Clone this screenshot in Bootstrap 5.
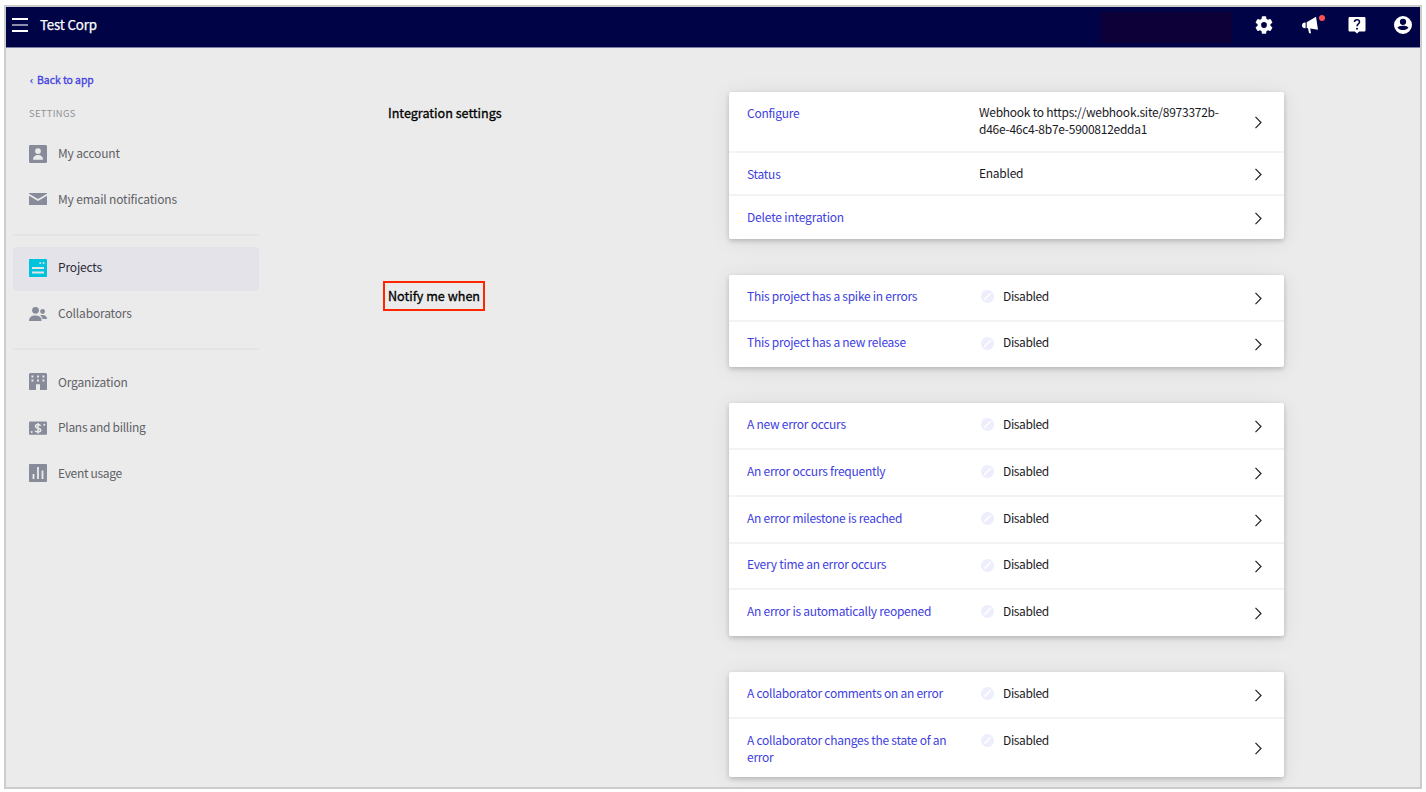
<!DOCTYPE html>
<html lang="en">
<head>
<meta charset="utf-8">
<meta name="viewport" content="width=device-width, initial-scale=1">
<title>Test Corp – Integration settings</title>
<link href="https://cdn.jsdelivr.net/npm/bootstrap@5.3.0/dist/css/bootstrap.min.css" rel="stylesheet">
<style>
body{font-family:"Noto Sans CJK SC","Open Sans",sans-serif;font-size:12px;line-height:17px;color:#1a1a1f;background:#fff;overflow:hidden}
a{text-decoration:none;color:#4040e0}
.frame{margin:5px 4px 0;width:1418px;height:784px;border:2px solid #ccc;background:#ebebeb;overflow:hidden}
.topbar{height:41px;background:#000446;border-bottom:1px solid #7c7ea6;padding:0 8px 4px 6px;--bs-navbar-padding-y:0}
.brand{font-size:13.3px;color:#fff;margin-left:12px;padding-bottom:2px;letter-spacing:-.15px;-webkit-text-stroke:.25px currentColor}
.masked{width:131px;height:31px;background:#0d0038;margin-right:23px;position:relative;top:2px}
.tool{width:18px;height:18px;display:block}
.dot{position:absolute;width:6px;height:6px;border-radius:50%;background:#ff4f57;left:17px;top:-1px}
.sidebar{width:253px;padding:23px 0 0 7px}
.back{font-size:10.4px;margin-left:17px;height:17px;letter-spacing:-.05px;-webkit-text-stroke:.3px currentColor}
.back .arrow{margin-right:4px}
.section-name{font-size:9.4px;color:#8f9096;margin:17px 0 0 16px;letter-spacing:.35px}
.side-item{height:45.6px;padding-left:16px;color:#606167;border-radius:3px;gap:11px;letter-spacing:-.17px}
.side-item span{padding-bottom:2px}
.side-item svg{width:18px;height:18px;fill:#888b99;flex:none}
.side-item.active{background:#e4e3e9;color:#292a38;height:44.4px;padding-bottom:2px}
.side-item.active svg{fill:#00c4dd}
.side-rule{height:2px;background:#e4e4e5;border:0;opacity:1;margin:0}
.labels{width:346px;padding-left:124px}
.heading{height:30px;line-height:26px;padding:0 3px;border:2px solid transparent;width:102px;white-space:nowrap;font-size:12.6px;font-weight:400;color:#000;-webkit-text-stroke:.3px currentColor}
.heading.marked{border-color:#ff2600}
.panels{width:555px;margin-left:124px;padding-top:44px}
.panel{background:#fff;border-radius:2px;box-shadow:0 2px 5px rgba(0,0,0,.2),0 2px 22px rgba(0,0,0,.07);margin-bottom:36px}
.entry{display:grid;grid-template-columns:232px 1fr 11px;padding:12px 19px 0 18px;border-bottom:2px solid #f3f3f3;height:47px;letter-spacing:-.26px}
.entry:last-child{border-bottom:0}
.entry.tight{padding-top:11px}
.entry>a{padding-right:20px}
.entry .plain{margin-top:-1px}
.entry .chev{width:9px;height:15px;align-self:center;margin-top:-11px;justify-self:start;fill:none;stroke:#222;stroke-width:1.2}
.off{width:13px;height:13px;margin:3px 9px 0 2px;flex:none}
.state{letter-spacing:-.38px}
</style>
</head>
<body>
<svg class="d-none">
<symbol id="chevron" viewBox="0 0 9 15"><path d="M1.5 1.8 7 7.5 1.5 13.2"/></symbol>
<symbol id="off" viewBox="0 0 13 13"><circle cx="6.5" cy="6.5" r="6.5" fill="#ededfc"/><path d="m3.2 9.8 6.6-6.6" stroke="#fff" stroke-width="1.6"/></symbol>
</svg>
<div class="frame">
<nav class="topbar navbar flex-nowrap">
  <div class="d-flex align-items-center">
    <svg width="16" height="14" viewBox="0 0 16 14"><path d="M0 1h16M0 13h16" stroke="#fff" stroke-width="2"/><path d="M0 7h16" stroke="#8b8dae" stroke-width="2"/></svg>
    <span class="brand">Test Corp</span>
  </div>
  <div class="d-flex align-items-center ms-auto">
    <div class="masked"></div>
    <svg class="tool" viewBox="2 2 20 20" fill="#fff"><path d="M19.14 12.94c.04-.3.06-.61.06-.94s-.02-.64-.07-.94l2.03-1.58a.5.5 0 0 0 .12-.61l-1.92-3.32a.5.5 0 0 0-.59-.22l-2.39.96a7 7 0 0 0-1.62-.94l-.36-2.54a.5.5 0 0 0-.48-.41h-3.84a.5.5 0 0 0-.47.41l-.36 2.54a7 7 0 0 0-1.62.94l-2.39-.96a.5.5 0 0 0-.59.22L2.73 8.87a.5.5 0 0 0 .12.61l2.03 1.58a7 7 0 0 0 0 1.88l-2.03 1.58a.5.5 0 0 0-.12.61l1.92 3.32c.12.22.37.29.59.22l2.39-.96c.5.38 1.03.7 1.62.94l.36 2.54c.05.24.24.41.48.41h3.84c.24 0 .44-.17.47-.41l.36-2.54a7 7 0 0 0 1.62-.94l2.39.96c.22.08.47 0 .59-.22l1.92-3.32a.5.5 0 0 0-.12-.61zM12 15.2a3.2 3.2 0 1 1 0-6.4 3.2 3.2 0 0 1 0 6.4z"/></svg>
    <span class="position-relative" style="margin-left:29px"><svg class="tool" viewBox="0 0 18 18" fill="#fff"><path d="M4.700 6.200 14 .7l2 13-7.800-1.200.8 5-2-.5-1-4.700-1.300-.2z"/><path d="M3.600 6.500v5.700C1.300 12.400 0 11.200 0 9.400c0-1.800 1.300-3.100 3.600-2.900z"/></svg><i class="dot"></i></span>
    <svg class="tool" style="margin-left:28px" viewBox="0 0 18 18"><path d="M1.800 1h14.400c.7 0 1.300.6 1.300 1.300v11.900c0 .7-.6 1.300-1.300 1.300h-5L9 17.500l-2.200-2H1.800c-.7 0-1.300-.6-1.300-1.300V2.300C.5 1.600 1.100 1 1.800 1z" fill="#fff"/><path d="M6.500 6.100C6.500 4.400 7.600 3.700 9 3.700s2.500.8 2.500 2.200C11.500 7.800 9 8 9 10.200" fill="none" stroke="#000446" stroke-width="1.500"/><circle cx="9" cy="12.700" r="1" fill="#000446"/></svg>
    <svg class="tool" style="margin-left:28px" viewBox="2 2 20 20" fill="#fff"><path d="M12 2a10 10 0 1 0 0 20 10 10 0 0 0 0-20zm0 3a3.500 3.500 0 1 1 0 7 3.500 3.500 0 0 1 0-7zm0 12.600c-2.500 0-4.700-.9-6-2.600.1-1.400 4-2.200 6-2.200s5.900.8 6 2.200c-1.300 1.700-3.500 2.600-6 2.600z"/></svg>
  </div>
</nav>
<div class="d-flex">
  <aside class="sidebar">
    <a class="back d-block" href="#"><span class="arrow">‹</span>Back to app</a>
    <div class="section-name">SETTINGS</div>
    <nav>
      <div class="side-item d-flex align-items-center" style="margin-top:9px"><svg viewBox="0 0 18 18"><path fill-rule="evenodd" d="M1 0h16l1 1v16l-1 1H1l-1-1V1zM9 3.200a2.900 2.900 0 1 0 0 5.800 2.900 2.900 0 0 0 0-5.800zM4 14.700h10c0-3.200-2-4.700-5-4.700s-5 1.500-5 4.700z"/></svg><span>My account</span></div>
      <div class="side-item d-flex align-items-center"><svg viewBox="0 0 18 18"><path d="M0 3h18v.8L9 9 0 3.800zM0 5.800l9 5.100 9-5.100V15H0z"/></svg><span>My email notifications</span></div>
      <hr class="side-rule" style="margin:11.800px 0 10.800px">
      <div class="side-item active d-flex align-items-center"><svg viewBox="0 0 18 18"><rect width="18" height="18" rx=".8"/><path d="M3 9h12M3 13.500h12" stroke="#e4e3e9" stroke-width="2"/><circle cx="11.200" cy="3.900" r="1" fill="#e4e3e9"/><circle cx="14.500" cy="3.900" r="1" fill="#e4e3e9"/></svg><span>Projects</span></div>
      <div class="side-item d-flex align-items-center"><svg viewBox="0 0 18 18"><circle cx="6.500" cy="5.300" r="3.400"/><circle cx="13.600" cy="6.500" r="2.400"/><path d="M0 16c0-3.500 2.200-5.500 6.500-5.500 3.500 0 5.300 1.300 6 3.500V16zM11.200 10.300c3.800-.8 6.800.4 6.800 3.700h-4.500c-.3-1.500-1-2.700-2.300-3.700z"/></svg><span>Collaborators</span></div>
      <hr class="side-rule" style="margin:11.200px 0 9.500px">
      <div class="side-item d-flex align-items-center"><svg viewBox="0 0 18 18"><path d="M1 0h16l1 1v16h-7v-5.800H7V17H0V1z"/><path d="M2.500 3.500h13M2.500 7.500h13" stroke="#ebebeb" stroke-width="1.900" stroke-dasharray="1.900 3.600"/></svg><span>Organization</span></div>
      <div class="side-item d-flex align-items-center"><svg viewBox="0 0 18 18"><rect y="2.500" width="18" height="13.300" rx="1"/><path d="M11.600 6.800C11 5.700 10 5.500 9 5.500c-1.500 0-2.500.7-2.500 1.800 0 2.600 5.200 1.200 5.200 3.800 0 1.200-1.100 1.900-2.700 1.900-1.300 0-2.300-.4-2.800-1.400M9 4v10.500" fill="none" stroke="#ebebeb" stroke-width="1.500"/><circle cx="2.700" cy="13" r="1" fill="#ebebeb"/><circle cx="15.300" cy="5.700" r="1" fill="#ebebeb"/></svg><span style="letter-spacing:-.3px">Plans and billing</span></div>
      <div class="side-item d-flex align-items-center"><svg viewBox="0 0 18 18"><rect width="18" height="18" rx=".8"/><path d="M4.500 15v-5M9 15V3M13.500 15V6.500" stroke="#ebebeb" stroke-width="1.800"/></svg><span style="letter-spacing:-.3px">Event usage</span></div>
    </nav>
  </aside>
  <div class="labels">
    <h2 class="heading mb-0" style="margin-top:50px">Integration settings</h2>
    <h2 class="heading marked mb-0" style="margin-top:153px">Notify me when</h2>
  </div>
  <main class="panels">
    <section class="panel">
      <div class="entry" style="height:61px"><a href="#">Configure</a><span class="plain">Webhook to https://webhook.site/8973372b-<br>d46e-46c4-8b7e-5900812edda1</span><svg class="chev"><use href="#chevron"/></svg></div>
      <div class="entry" style="height:43px"><a href="#">Status</a><span class="plain">Enabled</span><svg class="chev"><use href="#chevron"/></svg></div>
      <div class="entry" style="height:43px;letter-spacing:-.17px"><a href="#">Delete integration</a><span></span><svg class="chev"><use href="#chevron"/></svg></div>
    </section>
    <section class="panel">
      <div class="entry"><a href="#">This project has a spike in errors</a><span class="state d-flex align-items-start"><svg class="off"><use href="#off"/></svg>Disabled</span><svg class="chev"><use href="#chevron"/></svg></div>
      <div class="entry tight" style="height:45px"><a href="#">This project has a new release</a><span class="state d-flex align-items-start"><svg class="off mt-1"><use href="#off"/></svg>Disabled</span><svg class="chev"><use href="#chevron"/></svg></div>
    </section>
    <section class="panel">
      <div class="entry"><a href="#">A new error occurs</a><span class="state d-flex align-items-start"><svg class="off"><use href="#off"/></svg>Disabled</span><svg class="chev"><use href="#chevron"/></svg></div>
      <div class="entry"><a href="#">An error occurs frequently</a><span class="state d-flex align-items-start"><svg class="off"><use href="#off"/></svg>Disabled</span><svg class="chev"><use href="#chevron"/></svg></div>
      <div class="entry"><a href="#">An error milestone is reached</a><span class="state d-flex align-items-start"><svg class="off"><use href="#off"/></svg>Disabled</span><svg class="chev"><use href="#chevron"/></svg></div>
      <div class="entry tight" style="height:46px"><a href="#">Every time an error occurs</a><span class="state d-flex align-items-start"><svg class="off mt-1"><use href="#off"/></svg>Disabled</span><svg class="chev"><use href="#chevron"/></svg></div>
      <div class="entry" style="height:46px"><a href="#">An error is automatically reopened</a><span class="state d-flex align-items-start"><svg class="off"><use href="#off"/></svg>Disabled</span><svg class="chev"><use href="#chevron"/></svg></div>
    </section>
    <section class="panel">
      <div class="entry"><a href="#">A collaborator comments on an error</a><span class="state d-flex align-items-start"><svg class="off"><use href="#off"/></svg>Disabled</span><svg class="chev"><use href="#chevron"/></svg></div>
      <div class="entry" style="height:58px"><a href="#">A collaborator changes the state of an<br>error</a><span class="state d-flex align-items-start"><svg class="off"><use href="#off"/></svg>Disabled</span><svg class="chev"><use href="#chevron"/></svg></div>
    </section>
  </main>
</div>
</div>
<script src="https://cdn.jsdelivr.net/npm/bootstrap@5.3.0/dist/js/bootstrap.bundle.min.js"></script>
</body>
</html>
